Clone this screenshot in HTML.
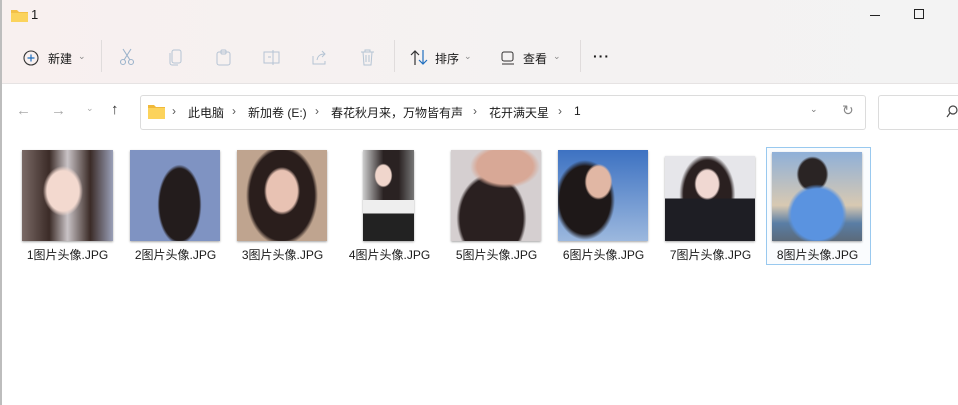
<!DOCTYPE html>
<html><head><meta charset="utf-8"><style>
*{margin:0;padding:0;box-sizing:border-box}
body{width:958px;height:405px;overflow:hidden;background:#fff;font-family:"Liberation Sans","Noto Sans CJK SC",sans-serif;font-size:12px;color:#1a1a1a;position:relative}
.hdr{position:absolute;left:0;top:0;width:958px;height:84px;background:linear-gradient(90deg,#f8f0ef,#f4f2f2 60%,#f3f3f3);border-bottom:1px solid #e6e3e3}
.lb{position:absolute;left:0;top:0;width:2px;height:405px;background:#bdbdbd}
.a{position:absolute}
.t{position:absolute;white-space:nowrap}
.sep{position:absolute;top:40px;width:1px;height:32px;background:#e0dcdc}
.th{position:absolute;box-shadow:0 1px 2px rgba(0,0,0,.35)}
.lbl{position:absolute;top:246px;width:107px;text-align:center;font-size:12px}
</style></head><body>
<div class="hdr"></div>
<div class="lb"></div>
<!-- title -->
<svg class="a" style="left:11px;top:8px" width="17" height="14"><path d="M0 2h6l2 2h9v10H0z" fill="#f3c046"/><path d="M0 5h17v9H0z" fill="#fbd35c"/></svg>
<div class="t" style="left:31px;top:7px;font-size:13px">1</div>
<div class="a" style="left:870px;top:15px;width:10px;height:1px;background:#222"></div>
<div class="a" style="left:914px;top:9px;width:10px;height:10px;border:1px solid #222"></div>
<!-- toolbar -->
<svg class="a" style="left:23px;top:50px" width="16" height="16"><circle cx="8" cy="8" r="7" fill="none" stroke="#333" stroke-width="1.1"/><path d="M8 4.5v7M4.5 8h7" stroke="#1f6fbf" stroke-width="1.2"/></svg>
<div class="t" style="left:48px;top:50px;font-size:12px">新建</div>
<div class="t" style="left:78px;top:51px;font-size:9px;color:#888">⌄</div>
<div class="sep" style="left:101px"></div>
<svg class="a" style="left:119px;top:48px" width="16" height="18" stroke="#9db4cc" fill="none" stroke-width="1.1"><path d="M4 1l7 11M12 1L5 12"/><circle cx="4" cy="14" r="2.5"/><circle cx="12" cy="14" r="2.5"/></svg>
<svg class="a" style="left:169px;top:49px" width="14" height="17" stroke="#b5c4d4" fill="none"><rect x="3" y="1" width="9" height="13" rx="2"/><path d="M1 4v10a2 2 0 002 2h6"/></svg>
<svg class="a" style="left:216px;top:49px" width="16" height="17" stroke="#b5c4d4" fill="none"><rect x="1" y="3" width="13" height="13" rx="2"/><rect x="5" y="1" width="5" height="4" rx="1"/></svg>
<svg class="a" style="left:263px;top:50px" width="17" height="15" stroke="#b5c4d4" fill="none"><rect x="1" y="2" width="15" height="11"/><path d="M10 0v15M5 7h3"/></svg>
<svg class="a" style="left:312px;top:50px" width="16" height="15" stroke="#b5c4d4" fill="none"><path d="M1 6v8h12v-3M5 10c1-5 4-6 8-6M10 1l3 3-3 3"/></svg>
<svg class="a" style="left:360px;top:49px" width="15" height="17" stroke="#b5c4d4" fill="none"><path d="M1 3h13M5 3V1h5v2M3 3l1 13h7l1-13M6 6v7M9 6v7"/></svg>
<div class="sep" style="left:394px"></div>
<svg class="a" style="left:410px;top:49px" width="18" height="17" fill="none" stroke-width="1.2"><path d="M5 16V2M1 6l4-4 4 4" stroke="#333"/><path d="M13 1v14M9 11l4 4 4-4" stroke="#1f6fbf"/></svg>
<div class="t" style="left:435px;top:50px">排序</div>
<div class="t" style="left:464px;top:51px;font-size:9px;color:#888">⌄</div>
<svg class="a" style="left:501px;top:51px" width="14" height="14" fill="none" stroke="#333"><rect x="1" y="1" width="11" height="9" rx="2"/><path d="M1 13h12"/></svg>
<div class="t" style="left:523px;top:50px">查看</div>
<div class="t" style="left:553px;top:51px;font-size:9px;color:#888">⌄</div>
<div class="sep" style="left:580px"></div>
<div class="t" style="left:593px;top:48px;font-size:14px;font-weight:bold;letter-spacing:1px">···</div>
<!-- nav -->
<div class="t" style="left:16px;top:102px;font-size:15px;color:#aaa">←</div>
<div class="t" style="left:51px;top:102px;font-size:15px;color:#aaa">→</div>
<div class="t" style="left:86px;top:103px;font-size:9px;color:#aaa">⌄</div>
<div class="t" style="left:111px;top:101px;font-size:15px;color:#333">↑</div>
<div class="a" style="left:140px;top:95px;width:726px;height:35px;border:1px solid #dcdcdc;border-radius:3px;background:#fff"></div>
<svg class="a" style="left:148px;top:104px" width="17" height="15"><path d="M0 1h6l2 2h9v12H0z" fill="#f0b93a"/><path d="M0 4h17v11H0z" fill="#fcd35b"/></svg>
<div class="t" style="left:172px;top:104px;color:#555">›</div>
<div class="t" style="left:188px;top:104px">此电脑</div>
<div class="t" style="left:232px;top:104px;color:#555">›</div>
<div class="t" style="left:248px;top:104px">新加卷 (E:)</div>
<div class="t" style="left:315px;top:104px;color:#555">›</div>
<div class="t" style="left:331px;top:104px">春花秋月来，万物皆有声</div>
<div class="t" style="left:473px;top:104px;color:#555">›</div>
<div class="t" style="left:489px;top:104px">花开满天星</div>
<div class="t" style="left:558px;top:104px;color:#555">›</div>
<div class="t" style="left:574px;top:104px">1</div>
<div class="t" style="left:810px;top:104px;font-size:9px;color:#777">⌄</div>
<div class="t" style="left:842px;top:102px;font-size:14px;color:#888">↻</div>
<div class="a" style="left:878px;top:95px;width:90px;height:35px;border:1px solid #dcdcdc;border-radius:3px;background:#fff"></div>
<svg class="a" style="left:946px;top:104px" width="12" height="14" fill="none" stroke="#444" stroke-width="1.2"><circle cx="7" cy="6" r="4"/><path d="M4 9l-3 4"/></svg>
<!-- thumbnails -->
<div class="th" style="left:22px;top:150px;width:91px;height:91px;background:radial-gradient(ellipse 20px 25px at 45% 45%,#f3d9cf 80%,transparent 100%),linear-gradient(90deg,#7a6a66 0%,#3b2b27 30%,#c9c3c6 50%,#3b2b27 75%,#9aa0b8 100%)"></div>
<div class="th" style="left:130px;top:150px;width:90px;height:91px;background:radial-gradient(ellipse 22px 40px at 55% 60%,#231c1c 90%,transparent 100%),#7f93c2"></div>
<div class="th" style="left:237px;top:150px;width:90px;height:91px;background:radial-gradient(ellipse 18px 24px at 50% 45%,#e8c2b3 85%,transparent 100%),radial-gradient(ellipse 36px 50px at 50% 50%,#2a1e1c 90%,transparent 100%),#bfa48f"></div>
<div class="th" style="left:363px;top:150px;width:51px;height:91px;background:radial-gradient(ellipse 9px 12px at 40% 28%,#f0d6cc 85%,transparent 100%),linear-gradient(180deg,transparent 55%,#eee 55%,#eee 70%,#222 70%),linear-gradient(90deg,#ccc,#2a2222 40%,#2a2222 70%,#777)"></div>
<div class="th" style="left:451px;top:150px;width:90px;height:91px;background:radial-gradient(ellipse 35px 22px at 60% 18%,#d8a896 80%,transparent 100%),radial-gradient(ellipse 35px 45px at 45% 75%,#2a2020 90%,transparent 100%),#d5cfd0"></div>
<div class="th" style="left:558px;top:150px;width:90px;height:91px;background:radial-gradient(ellipse 14px 18px at 45% 35%,#e1b7a4 85%,transparent 100%),radial-gradient(ellipse 30px 40px at 30% 55%,#1e1818 85%,transparent 100%),linear-gradient(180deg,#3d72c2,#9cb8de)"></div>
<div class="th" style="left:665px;top:156px;width:90px;height:85px;background:radial-gradient(ellipse 13px 16px at 47% 33%,#f0d8d2 85%,transparent 100%),linear-gradient(180deg,transparent 50%,#1e1e24 50%),radial-gradient(ellipse 28px 40px at 47% 45%,#2a2020 85%,transparent 100%),#e6e6ea"></div>
<div class="a" style="left:766px;top:147px;width:105px;height:118px;border:1px solid #99c9ef;background:#fafcfe"></div>
<div class="th" style="left:772px;top:152px;width:90px;height:89px;background:radial-gradient(ellipse 30px 30px at 50% 70%,#5a93e0 85%,transparent 100%),radial-gradient(ellipse 16px 18px at 45% 25%,#2a2424 85%,transparent 100%),linear-gradient(180deg,#8fb0d8 0%,#d8c9b2 60%,#5a7ea5 80%,#5b6a7a)"></div>
<div class="lbl" style="left:14px">1图片头像.JPG</div>
<div class="lbl" style="left:122px">2图片头像.JPG</div>
<div class="lbl" style="left:229px">3图片头像.JPG</div>
<div class="lbl" style="left:336px">4图片头像.JPG</div>
<div class="lbl" style="left:443px">5图片头像.JPG</div>
<div class="lbl" style="left:550px">6图片头像.JPG</div>
<div class="lbl" style="left:657px">7图片头像.JPG</div>
<div class="lbl" style="left:764px">8图片头像.JPG</div>
</body></html>
